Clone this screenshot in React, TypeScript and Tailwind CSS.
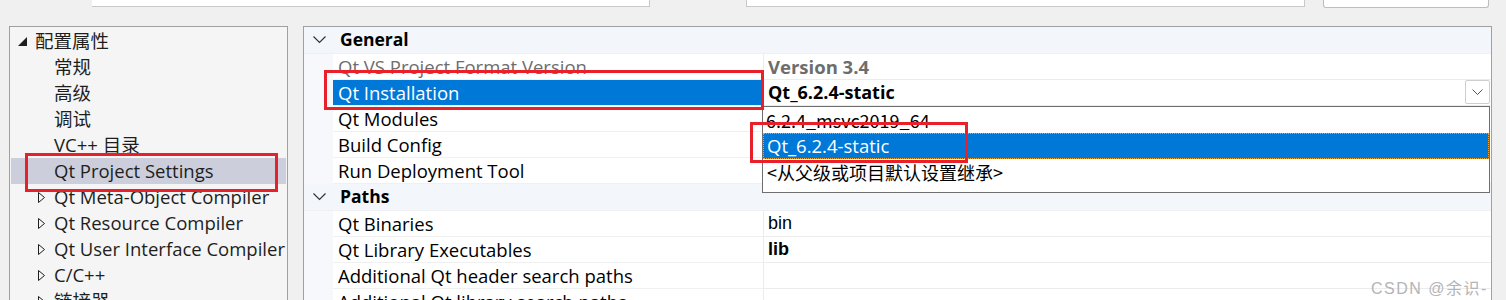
import React from 'react';

const UI = "font-['Open_Sans','Noto_Sans_CJK_SC',sans-serif]";
const YAHEI = "font-['Noto_Sans_CJK_SC','Noto_Sans',sans-serif]";
const ARIAL = "font-['Liberation_Sans','Noto_Sans_CJK_SC',sans-serif]";

type TreeItem = { label: string; level: 0 | 1; icon?: 'open' | 'closed'; selected?: boolean };

const treeItems: TreeItem[] = [
    { label: '配置属性', level: 0, icon: 'open' },
    { label: '常规', level: 1 },
    { label: '高级', level: 1 },
    { label: '调试', level: 1 },
    { label: 'VC++ 目录', level: 1 },
    { label: 'Qt Project Settings', level: 1, selected: true },
    { label: 'Qt Meta-Object Compiler', level: 1, icon: 'closed' },
    { label: 'Qt Resource Compiler', level: 1, icon: 'closed' },
    { label: 'Qt User Interface Compiler', level: 1, icon: 'closed' },
    { label: 'C/C++', level: 1, icon: 'closed' },
    { label: '链接器', level: 1, icon: 'closed' },
];

const OpenTriangle = () => (
    <svg width="9" height="9" viewBox="0 0 9 9">
        <polygon points="9,0 9,9 0,9" fill="#1e1e1e" />
    </svg>
);

const ClosedTriangle = () => (
    <svg width="7" height="11" viewBox="0 0 7 11">
        <polygon points="0.5,0.5 6.5,5.5 0.5,10.5" fill="none" stroke="#1e1e1e" strokeWidth="1" />
    </svg>
);

const Chevron = ({ color = '#333' }: { color?: string }) => (
    <svg width="13" height="8" viewBox="0 0 13 8">
        <polyline points="0.5,0.5 6.5,6.5 12.5,0.5" fill="none" stroke={color} strokeWidth="1.2" />
    </svg>
);

const TreeRow: React.FC<{ item: TreeItem }> = ({ item }) => (
    <div className={`h-[26px] flex items-center text-[18.5px] text-[#1e1e1e] ${item.selected ? 'bg-[#cccedb]' : ''}`}>
        {item.level === 0 ? (
            <span className="w-[24px] pl-[7px] flex items-center"><OpenTriangle /></span>
        ) : (
            <span className="w-[43px] pl-[27px] flex items-center">{item.icon === 'closed' && <ClosedTriangle />}</span>
        )}
        <span className="whitespace-nowrap leading-none">{item.label}</span>
    </div>
);

const SectionRow: React.FC<{ title: string }> = ({ title }) => (
    <div className="h-[27px] flex items-center bg-[#f3f6fa] border-b border-[#eef0f3]">
        <span className="w-[36px] pl-[9px] flex items-center"><Chevron /></span>
        <span className="font-bold text-[17.5px] text-black leading-none">{title}</span>
    </div>
);

type Prop = { name: string; value?: React.ReactNode; dim?: boolean; selected?: boolean; combo?: boolean };

const PropRow: React.FC<{ p: Prop }> = ({ p }) => (
    <div className="h-[26px] flex">
        <div className="w-[29px] bg-[#f6f8fb]" />
        <div className={`w-[430px] flex items-center pl-[5px] border-b border-[#f0f0f0] text-[18.5px] whitespace-nowrap ${p.selected ? 'bg-[#0078d7] text-white' : p.dim ? 'text-[#6d6d6d]' : 'text-black'}`}>
            {p.name}
        </div>
        <div className="flex-1 flex items-center pl-[4px] border-l border-b border-[#ececec] relative">
            {p.value}
            {p.combo && (
                <div className="absolute right-[1px] top-0 w-[25px] h-[24px] border border-[#cfcfcf] rounded-[2px] bg-white flex items-center justify-center">
                    <svg width="11" height="6" viewBox="0 0 11 6">
                        <polyline points="0.5,0.5 5.5,5.5 10.5,0.5" fill="none" stroke="#555" strokeWidth="1" />
                    </svg>
                </div>
            )}
        </div>
    </div>
);

const general: Prop[] = [
    { name: 'Qt VS Project Format Version', dim: true, value: <span className="font-bold text-[18.5px] text-[#6d6d6d]">Version 3.4</span> },
    { name: 'Qt Installation', selected: true, combo: true, value: <span className="font-bold text-[18px] text-black">Qt_6.2.4-static</span> },
    { name: 'Qt Modules' },
    { name: 'Build Config' },
    { name: 'Run Deployment Tool' },
];

const paths: Prop[] = [
    { name: 'Qt Binaries', value: <span className={`${ARIAL} text-[18px] text-black`}>bin</span> },
    { name: 'Qt Library Executables', value: <span className={`${ARIAL} font-bold text-[18px] text-black`}>lib</span> },
    { name: 'Additional Qt header search paths' },
    { name: 'Additional Qt library search paths' },
];

export default function App() {
    return (
        <div className={`relative w-[1506px] h-[300px] overflow-hidden bg-[#f0f0f0] ${UI}`}>
            {/* top form strip (cut off) */}
            <div className="h-[7px] flex items-start">
                <div className="ml-[48px] w-[44px] h-[3px] overflow-hidden text-[17px] text-[#1e1e1e]">
                    <div className="-mt-[20px] leading-[22px]">平台(P):</div>
                </div>
                <div className="w-[558px] h-[7px] bg-white border-r border-b border-[#c8c8c8]" />
                <div className="ml-[58px] w-[38px] h-[3px] overflow-hidden text-[17px] text-[#1e1e1e]">
                    <div className="-mt-[20px] leading-[22px]">平(P)</div>
                </div>
                <div className="w-[559px] h-[7px] bg-white border-l border-r border-b border-[#c8c8c8]" />
                <div className="ml-[18px] w-[166px] h-[8px] bg-white border-l border-r border-b border-[#bdbdbd] rounded-b-[3px]" />
            </div>

            <div className="mt-[19px] flex">
                {/* left tree */}
                <div className="ml-[9px] w-[279px] h-[290px] border border-[#a0a0a0] bg-[#f5f5f5] pt-[1px] px-[1px]">
                    {treeItems.map(item => <TreeRow key={item.label} item={item} />)}
                </div>

                {/* property grid */}
                <div className="ml-[15px] w-[1189px] h-[290px] border border-[#a0a0a0] bg-white">
                    <SectionRow title="General" />
                    {general.map(p => <PropRow key={p.name} p={p} />)}
                    <SectionRow title="Paths" />
                    {paths.map(p => <PropRow key={p.name} p={p} />)}
                </div>
            </div>

            {/* opened combo list */}
            <div className="absolute left-[762px] top-[106px] w-[728px] h-[87px] border border-[#6e6e6e] bg-white">
                <div className={`h-[26px] flex items-center pl-[3px] text-[18px] text-black ${YAHEI}`}>6.2.4_msvc2019_64</div>
                <div className="h-[26px] flex items-center pl-[3px] text-[18.5px] text-white bg-[#0078d7] border border-dotted border-[#f0a030]">Qt_6.2.4-static</div>
                <div className={`h-[26px] flex items-center pl-[4px] text-[18px] text-black ${YAHEI}`}>&lt;从父级或项目默认设置继承&gt;</div>
            </div>

            {/* red annotation boxes */}
            <div className="absolute left-[25px] top-[153px] w-[253px] h-[39px] border-[3px] border-[#e8202a]" />
            <div className="absolute left-[324px] top-[70px] w-[440px] h-[40px] border-[3px] border-[#e8202a]" />
            <div className="absolute left-[750px] top-[122px] w-[218px] h-[41px] border-[3px] border-[#e8202a]" />

            {/* watermark */}
            <div className="absolute left-[1371px] top-[277px] text-[16px] tracking-[1.5px] text-[#b4b4b4] whitespace-nowrap font-['Liberation_Sans','Noto_Sans_CJK_SC',sans-serif]">CSDN @余识-</div>
        </div>
    );
}
